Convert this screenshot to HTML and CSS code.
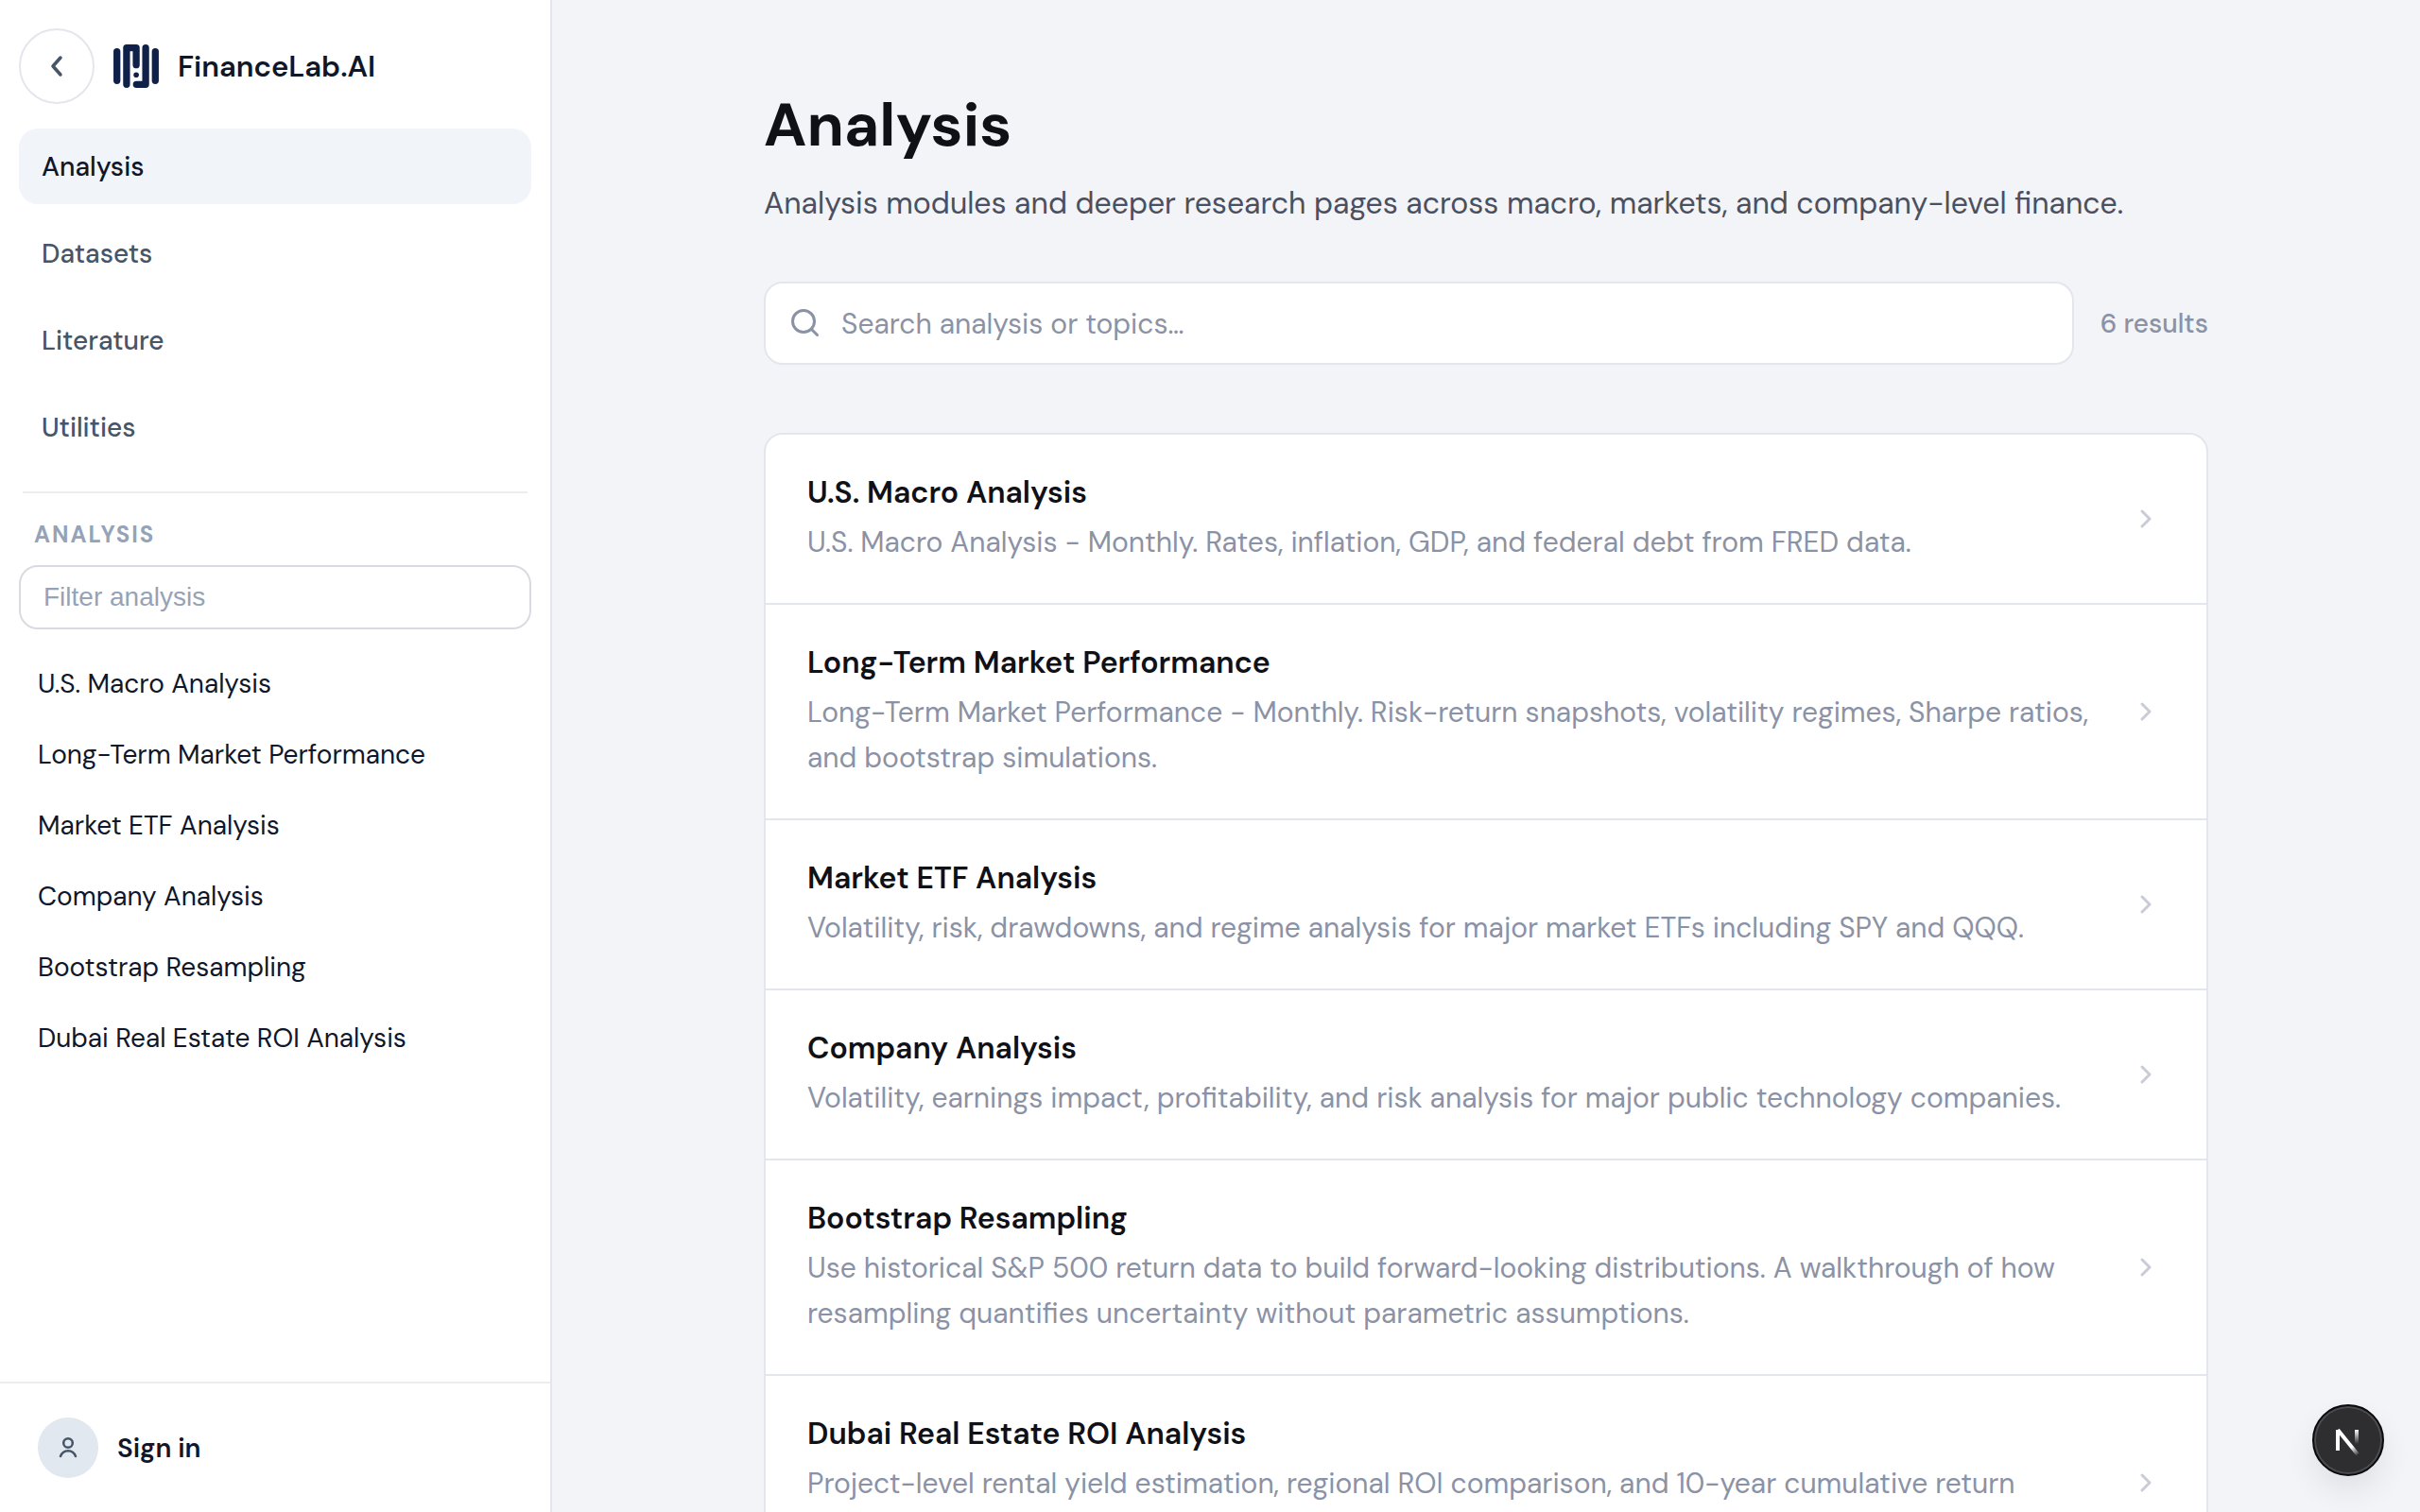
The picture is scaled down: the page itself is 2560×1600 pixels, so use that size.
FILE: index.html
```html
<!DOCTYPE html>
<html lang="en">
<head>
  <meta charset="UTF-8">
  <meta name="viewport" content="width=device-width, initial-scale=1.0">
  <link rel="stylesheet" href="styles.css">
  <title>Analysis - FinanceLab.AI</title>
</head>
<body>

<div class="layout">
  <aside class="sidebar">
    <div class="sidebar-header">
      <button class="collapse-btn" type="button" aria-label="Collapse sidebar">
        <svg width="32" height="32" viewBox="0 0 32 32" fill="none" stroke="currentColor" stroke-width="3.5" stroke-linecap="round" stroke-linejoin="round"><path d="M20 7l-8 9 8 9"/></svg>
      </button>
      <a class="brand" href="#">
        <svg class="brand-logo" width="48" height="46" viewBox="0 0 48 46" fill="none" stroke="#0f2148" stroke-width="7.3" stroke-linecap="round" stroke-linejoin="round">
          <path d="M3.7 7.7v30.6"/>
          <path d="M13.9 42.3V3.7h10.2v18"/>
          <path d="M34.1 3.7v38.6h-9.8"/>
          <path d="M44.3 7.7v30.6"/>
          <circle cx="24.1" cy="32.3" r="2.8" fill="#0f2148" stroke="none"/>
        </svg>
        <span>FinanceLab.AI</span>
      </a>
    </div>

    <nav class="main-nav">
      <a class="nav-item active" href="#">Analysis</a>
      <a class="nav-item" href="#">Datasets</a>
      <a class="nav-item" href="#">Literature</a>
      <a class="nav-item" href="#">Utilities</a>
    </nav>

    <div class="sub-nav">
      <label class="sub-nav-label" for="filter">Analysis</label>
      <input class="filter-input" id="filter" type="text" placeholder="Filter analysis">
      <a class="sub-nav-item" href="#">U.S. Macro Analysis</a>
      <a class="sub-nav-item" href="#">Long-Term Market Performance</a>
      <a class="sub-nav-item" href="#">Market ETF Analysis</a>
      <a class="sub-nav-item" href="#">Company Analysis</a>
      <a class="sub-nav-item" href="#">Bootstrap Resampling</a>
      <a class="sub-nav-item" href="#">Dubai Real Estate ROI Analysis</a>
    </div>

    <div class="sidebar-footer">
      <a class="sign-in" href="#">
        <span class="avatar">
          <svg width="32" height="32" viewBox="0 0 32 32" fill="none" stroke="currentColor" stroke-width="2.5" stroke-linecap="round"><circle cx="16" cy="11" r="4.8"/><path d="M8 25c1.500-3.800 4.500-5.800 8-5.800s6.500 2 8 5.800"/></svg>
        </span>
        Sign in
      </a>
    </div>
  </aside>

  <main class="content">
    <div class="container">
      <h1 class="page-title">Analysis</h1>
      <p class="page-subtitle">Analysis modules and deeper research pages across macro, markets, and company-level finance.</p>

      <div class="search-row">
        <label class="search-box">
          <svg width="36" height="36" viewBox="0 0 36 36" fill="none" stroke="currentColor" stroke-width="3" stroke-linecap="round"><circle cx="16" cy="16" r="11.500"/><path d="M24.500 24.500l6 6"/></svg>
          <input type="text" placeholder="Search analysis or topics…" aria-label="Search analysis or topics">
        </label>
        <span class="result-count">6 results</span>
      </div>

      <div class="card-list">
        <a class="card-row" href="#">
          <div class="card-text">
            <h2>U.S. Macro Analysis</h2>
            <p>U.S. Macro Analysis - Monthly. Rates, inflation, GDP, and federal debt from FRED data.</p>
          </div>
          <svg class="chevron" viewBox="0 0 40 40"><path d="M16 12l8 8-8 8"/></svg>
        </a>
        <a class="card-row" href="#">
          <div class="card-text">
            <h2>Long-Term Market Performance</h2>
            <p>Long-Term Market Performance - Monthly. Risk-return snapshots, volatility regimes, Sharpe ratios, and bootstrap simulations.</p>
          </div>
          <svg class="chevron" viewBox="0 0 40 40"><path d="M16 12l8 8-8 8"/></svg>
        </a>
        <a class="card-row" href="#">
          <div class="card-text">
            <h2>Market ETF Analysis</h2>
            <p>Volatility, risk, drawdowns, and regime analysis for major market ETFs including SPY and QQQ.</p>
          </div>
          <svg class="chevron" viewBox="0 0 40 40"><path d="M16 12l8 8-8 8"/></svg>
        </a>
        <a class="card-row" href="#">
          <div class="card-text">
            <h2>Company Analysis</h2>
            <p>Volatility, earnings impact, profitability, and risk analysis for major public technology companies.</p>
          </div>
          <svg class="chevron" viewBox="0 0 40 40"><path d="M16 12l8 8-8 8"/></svg>
        </a>
        <a class="card-row" href="#">
          <div class="card-text">
            <h2>Bootstrap Resampling</h2>
            <p>Use historical S&amp;P 500 return data to build forward-looking distributions. A walkthrough of how resampling quantifies uncertainty without parametric assumptions.</p>
          </div>
          <svg class="chevron" viewBox="0 0 40 40"><path d="M16 12l8 8-8 8"/></svg>
        </a>
        <a class="card-row" href="#">
          <div class="card-text">
            <h2>Dubai Real Estate ROI Analysis</h2>
            <p>Project-level rental yield estimation, regional ROI comparison, and 10-year cumulative return projections.</p>
          </div>
          <svg class="chevron" viewBox="0 0 40 40"><path d="M16 12l8 8-8 8"/></svg>
        </a>
      </div>
    </div>
  </main>
</div>

<button class="dev-badge" type="button" aria-label="Open dev tools">
  <svg width="40" height="40" viewBox="0 0 40 40" fill="none">
    <defs>
      <linearGradient id="diagonal" gradientUnits="userSpaceOnUse" x1="24" y1="27" x2="31" y2="36">
        <stop stop-color="#fff"/>
        <stop offset="1" stop-color="#fff" stop-opacity="0"/>
      </linearGradient>
      <linearGradient id="stem" gradientUnits="userSpaceOnUse" x1="29" y1="9" x2="29" y2="24">
        <stop stop-color="#fff"/>
        <stop offset="1" stop-color="#fff" stop-opacity="0"/>
      </linearGradient>
    </defs>
    <path d="M9 31V9" stroke="#fff" stroke-width="4"/>
    <path d="M9 9l21 26" stroke="url(#diagonal)" stroke-width="4"/>
    <path d="M29 9v15" stroke="url(#stem)" stroke-width="4"/>
  </svg>
</button>

</body>
</html>
```

FILE: styles.css
```css
* {
  box-sizing: border-box;
}

body {
  margin: 0;
  font-family: "DM Sans", Inter, sans-serif;
  font-size: 28px;
  color: #0f172a;
  background-color: #f2f4f8;
}

a {
  color: inherit;
  text-decoration: none;
}

.layout {
  display: flex;
  height: 100vh;
  overflow: hidden;
}

/* Sidebar */
.sidebar {
  width: 584px;
  flex-shrink: 0;
  display: flex;
  flex-direction: column;
  background-color: #fff;
  border-right: 2px solid #e4e6ed;
}

.sidebar-header {
  display: flex;
  align-items: center;
  gap: 20px;
  padding: 30px 20px 26px;
}

.collapse-btn {
  width: 80px;
  height: 80px;
  padding: 0;
  display: flex;
  align-items: center;
  justify-content: center;
  color: #475569;
  background-color: #fff;
  border: 2px solid #e4e6ed;
  border-radius: 50%;
}

.brand {
  display: flex;
  align-items: center;
  gap: 20px;
  font-size: 31px;
  font-weight: 600;
}

.main-nav {
  display: flex;
  flex-direction: column;
  gap: 12px;
  padding: 0 20px;
}

.nav-item {
  padding: 2px 24px 0;
  line-height: 78px;
  color: #475569;
  font-weight: 500;
  border-radius: 20px;
}

.nav-item.active {
  color: #0f172a;
  background-color: #f1f5f9;
}

.sub-nav {
  flex: 1;
  display: flex;
  flex-direction: column;
  margin: 28px 20px 0;
}

.sub-nav::before {
  content: "";
  height: 2px;
  margin: 0 4px;
  background-color: #ededf0;
}

.sub-nav-label {
  padding: 28px 16px 16px;
  font-size: 24px;
  font-weight: 700;
  line-height: 32px;
  letter-spacing: 2px;
  text-transform: uppercase;
  color: #94a3b8;
}

.filter-input {
  height: 68px;
  margin-bottom: 20px;
  padding: 0 24px;
  font-family: "Liberation Sans", Arial, sans-serif;
  font-size: 28px;
  border: 2px solid #d9dbe0;
  border-radius: 20px;
}

.filter-input::placeholder {
  color: #94a3b8;
}

.sub-nav-item {
  padding: 0 20px;
  line-height: 75px;
}

.sidebar-footer {
  padding: 36px 40px;
  border-top: 2px solid #ededf0;
}

.sign-in {
  display: flex;
  align-items: center;
  gap: 20px;
  font-weight: 600;
}

.avatar {
  width: 64px;
  height: 64px;
  display: flex;
  align-items: center;
  justify-content: center;
  color: #475569;
  background-color: #e2e8f0;
  border-radius: 50%;
}

/* Content */
.content {
  flex: 1;
  padding: 96px 64px;
  overflow-y: auto;
  scrollbar-width: none;
}

.container {
  max-width: 1528px;
  margin: 0 auto;
}

.page-title {
  margin: 0 0 16px;
  font-size: 64px;
  font-weight: 700;
  line-height: 74px;
  color: #0f1117;
}

.page-subtitle {
  margin: 0 0 54px;
  font-size: 32px;
  line-height: 58px;
  color: #4a5060;
}

.search-row {
  display: flex;
  align-items: center;
  gap: 28px;
  margin-bottom: 72px;
}

.search-box {
  flex: 1;
  height: 88px;
  display: flex;
  align-items: center;
  gap: 20px;
  padding: 0 24px;
  color: #8b92a5;
  background-color: #fff;
  border: 2px solid #e4e6ed;
  border-radius: 20px;
}

.search-box input {
  flex: 1;
  padding: 0;
  font: inherit;
  font-size: 30px;
  border: none;
  outline: none;
}

.search-box input::placeholder {
  color: #8b92a5;
}

.result-count {
  font-weight: 500;
  color: #8b92a5;
}

.card-list {
  background-color: #fff;
  border: 2px solid #e4e6ed;
  border-radius: 20px;
}

.card-row {
  display: flex;
  align-items: center;
  gap: 32px;
  padding: 40px 44px;
  border-bottom: 2px solid #e4e6ed;
}

.card-row:last-child {
  border-bottom: none;
}

.card-text {
  flex: 1;
}

.card-text h2 {
  margin: 0 0 8px;
  font-size: 32px;
  font-weight: 600;
  line-height: 42px;
  color: #0f1117;
}

.card-text p {
  margin: 0;
  font-size: 30px;
  line-height: 48px;
  color: #8b92a5;
}

.chevron {
  width: 40px;
  height: 40px;
  fill: none;
  stroke: #c8ccd6;
  stroke-width: 3;
  stroke-linecap: round;
  stroke-linejoin: round;
}

/* Floating badge over the page */
.dev-badge {
  position: fixed;
  right: 38px;
  bottom: 38px;
  width: 76px;
  height: 76px;
  padding: 0;
  display: flex;
  align-items: center;
  justify-content: center;
  background-color: #2e2e30;
  border: 2px solid #0a0a12;
  border-radius: 50%;
  box-shadow: inset 0 0 0 2px #4d4b4b, 0 16px 32px rgba(0, 0, 0, 0.08);
}
```
